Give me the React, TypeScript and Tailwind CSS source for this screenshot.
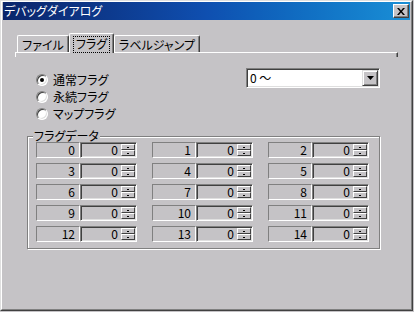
import React from "react";

const font = "font-['Noto_Sans_CJK_JP','Noto_Sans',sans-serif] [font-feature-settings:'palt'] text-[12px] leading-none";

function Spinner() {
  return (
    <div className="flex flex-col w-[14px] h-[12px]">
      {[0, 1].map((i) => (
        <div
          key={i}
          className="flex-1 flex items-center justify-center bg-[#c5c3c6] border-t border-l border-t-white border-l-white border-b border-r border-b-[#404040] border-r-[#404040]"
        >
          <div className="w-[2px] h-[1px] bg-black" />
        </div>
      ))}
    </div>
  );
}

function FlagCell({ n }: { n: number }) {
  return (
    <div className="flex w-[101px] h-[16px]">
      <div className="w-[44px] h-full flex items-center justify-end pr-[4px] border-t border-l border-t-[#808080] border-l-[#808080] border-b border-r border-b-white border-r-white">
        {n}
      </div>
      <div className="w-[57px] h-full flex items-center justify-end pr-[1px] border-t border-l border-t-[#808080] border-l-[#808080] border-b border-r border-b-white border-r-white shadow-[inset_1px_1px_0_#404040,inset_-1px_-1px_0_#dfdfdf]">
        <span className="mr-[3px]">0</span>
        <Spinner />
      </div>
    </div>
  );
}

function Radio({ label, checked, h }: { label: string; checked?: boolean; h: string }) {
  return (
    <div className={`flex items-center ${h}`}>
      <div className="w-[12px] h-[12px] rounded-full bg-white border border-t-[#808080] border-l-[#808080] border-b-white border-r-white shadow-[inset_1px_1px_0_#404040,inset_-1px_-1px_0_#dfdfdf] flex items-center justify-center">
        {checked && <div className="w-[4px] h-[4px] rounded-full bg-black" />}
      </div>
      <span className="ml-[5px]">{label}</span>
    </div>
  );
}

export default function App() {
  const tabs = [
    { label: "ファイル", w: "w-[52px]" },
    { label: "フラグ", w: "w-[45px]", active: true },
    { label: "ラベルジャンプ", w: "w-[86px]" },
  ];

  return (
    <div className={`w-[414px] h-[312px] bg-[#c5c3c6] overflow-hidden text-black ${font}`}>
      <div className="w-[413px] h-[311px] border border-t-[#dfdfdf] border-l-[#dfdfdf] border-b-[#404040] border-r-[#404040]">
        <div className="w-full h-full border border-t-white border-l-white border-b-[#808080] border-r-[#808080] px-[1px]">
          {/* title bar */}
          <div className="h-[18px] flex items-center justify-between bg-gradient-to-r from-[#0a246a] via-[#0f4fb0] to-[#1a8fd6] pl-[1px] pr-[1px]">
            <span className="text-white">デバッグダイアログ</span>
            <div className="w-[16px] h-[14px] bg-[#c5c3c6] border border-t-white border-l-white border-b-[#404040] border-r-[#404040] shadow-[inset_-1px_-1px_0_#808080] flex items-center justify-center">
              <svg width="8" height="7" viewBox="0 0 8 7">
                <path d="M0 0h2l2 2.5L6 0h2L5 3.5 8 7H6L4 4.5 2 7H0l3-3.5z" fill="#000" />
              </svg>
            </div>
          </div>

          {/* tabs */}
          <div className="ml-[12px] mt-[13px] w-[383px]">
            <div className="flex items-end h-[19px] pl-[2px]">
              {tabs.map((t) =>
                t.active ? (
                  <div
                    key={t.label}
                    className={`${t.w} h-[20px] -mb-[1px] relative z-10 bg-[#c5c3c6] border-t border-l border-white border-r border-r-[#404040] rounded-t-[2px] shadow-[inset_-1px_0_#808080] flex items-start justify-center pt-[2px]`}
                  >
                    <span className="border border-dotted border-black px-[2px] pt-[1px] pb-[2px]">{t.label}</span>
                  </div>
                ) : (
                  <div
                    key={t.label}
                    className={`${t.w} h-[17px] border-t border-l border-white border-r border-r-[#404040] rounded-t-[2px] shadow-[inset_-1px_0_#808080] flex items-center justify-center pt-[1px]`}
                  >
                    {t.label}
                  </div>
                )
              )}
            </div>
            <div className="h-[5px] border-t border-l border-white border-r border-r-[#404040] shadow-[inset_-1px_0_#808080]" />
          </div>

          {/* radios and combo */}
          <div className="flex mt-[11px]">
            <div className="w-[243px] pl-[33px] pt-[4px]">
              <Radio label="通常フラグ" checked h="h-[16px]" />
              <Radio label="永続フラグ" h="h-[17px]" />
              <Radio label="マップフラグ" h="h-[17px]" />
            </div>
            <div className="w-[134px] h-[20px] bg-white border border-t-[#808080] border-l-[#808080] border-b-white border-r-white shadow-[inset_1px_1px_0_#404040,inset_-1px_-1px_0_#dfdfdf] flex items-center p-[1px]">
              <span className="flex-1 pl-[2px]">0 〜</span>
              <div className="w-[16px] h-[16px] bg-[#c5c3c6] border border-t-[#dfdfdf] border-l-[#dfdfdf] border-b-[#404040] border-r-[#404040] shadow-[inset_1px_1px_0_white,inset_-1px_-1px_0_#808080] flex items-center justify-center">
                <svg width="7" height="4" viewBox="0 0 7 4">
                  <path d="M0 0h7L3.5 4z" fill="#000" />
                </svg>
              </div>
            </div>
          </div>

          {/* group box */}
          <div className="relative ml-[24px] mt-[14px] w-[353px] h-[113px] border border-[#808080] shadow-[1px_1px_0_white,inset_1px_1px_0_white] pt-[5px] pl-[8px]">
            <span className="absolute left-[5px] -top-[7px] bg-[#c5c3c6] px-[1px]">フラグデータ</span>
            <div className="grid grid-cols-[101px_101px_101px] gap-x-[15px] gap-y-[5px]">
              {Array.from({ length: 15 }, (_, i) => (
                <FlagCell key={i} n={i} />
              ))}
            </div>
          </div>
        </div>
      </div>
    </div>
  );
}
